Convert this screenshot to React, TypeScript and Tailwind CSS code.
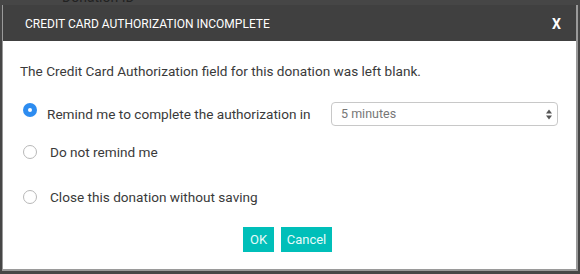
import { useState } from 'react';

const options = [
  { id: 'remind', label: 'Remind me to complete the authorization in' },
  { id: 'none', label: 'Do not remind me' },
  { id: 'close', label: 'Close this donation without saving' },
];

const Radio = ({ checked }: { checked: boolean }) =>
  checked ? (
    <span className="flex h-[14px] w-[14px] shrink-0 items-center justify-center rounded-full bg-[#2d8cf0]">
      <span className="block h-[4px] w-[4px] rounded-full bg-white" />
    </span>
  ) : (
    <span className="block h-[14px] w-[14px] shrink-0 rounded-full border border-[#b8b8b8] bg-white" />
  );

export default function App() {
  const [choice, setChoice] = useState('remind');

  return (
    <div
      className="relative h-[274px] w-[580px] overflow-hidden bg-[#464646] pt-[5px] pl-[2px]"
      style={{ fontFamily: 'Roboto, "Liberation Sans", sans-serif' }}
    >
      {/* page behind the overlay */}
      <div className="absolute top-[-10px] left-[62px] text-[14px] leading-[14px] text-[#222]">
        Donation ID
      </div>

      <div className="relative flex h-[266px] w-[576px] flex-col border-r-[2px] border-b-[2px] border-l-[1px] border-[#9a9a9a] bg-white">
        <div className="flex h-[36px] shrink-0 items-center justify-between bg-[#404040] pt-[2px] pr-[15px] pl-[22px] text-white">
          <span className="text-[12px]">CREDIT CARD AUTHORIZATION INCOMPLETE</span>
          <span className="text-[14px] font-bold">X</span>
        </div>

        <div className="flex flex-1 flex-col pt-[20px] pr-[18px] pl-[17px] text-[13.6px] text-[#3a3a3a]">
          <p className="h-[20px] leading-[20px] whitespace-nowrap">
            The Credit Card Authorization field for this donation was left
            blank.
          </p>

          <label
            onClick={() => setChoice('remind')}
            className="mt-[21px] flex h-[24px] cursor-pointer items-center whitespace-nowrap"
          >
            <span className="ml-[3px] -mt-[8px]">
              <Radio checked={choice === 'remind'} />
            </span>
            <span className="ml-[10px]">{options[0].label}</span>
            <div className="ml-auto flex h-[24px] w-[227px] items-center justify-between rounded-[4px] border border-[#c8c8c8] bg-white pr-[5px] pl-[9px] text-[12.5px] text-[#777]">
              <span>5 minutes</span>
              <svg width="6" height="11" viewBox="0 0 6 11">
                <path d="M0 4.5 L3 0.5 L6 4.5 Z" fill="#555" />
                <path d="M0 6.5 L3 10.5 L6 6.5 Z" fill="#555" />
              </svg>
            </div>
          </label>

          {options.slice(1).map((o, i) => (
            <label
              key={o.id}
              onClick={() => setChoice(o.id)}
              className={`flex h-[24px] cursor-pointer items-center whitespace-nowrap ${
                i === 0 ? 'mt-[14px]' : 'mt-[21px]'
              }`}
            >
              <span className="ml-[3px]">
                <Radio checked={choice === o.id} />
              </span>
              <span className="ml-[13px]">{o.label}</span>
            </label>
          ))}

          <div className="mt-[18px] flex justify-center gap-[7px] pr-[3px]">
            <button className="h-[25px] w-[31px] bg-[#00bfb9] text-[13px] text-[#e6fbfa]">
              OK
            </button>
            <button className="h-[25px] w-[51px] bg-[#00bfb9] text-[13px] text-[#e6fbfa]">
              Cancel
            </button>
          </div>
        </div>
      </div>
    </div>
  );
}
